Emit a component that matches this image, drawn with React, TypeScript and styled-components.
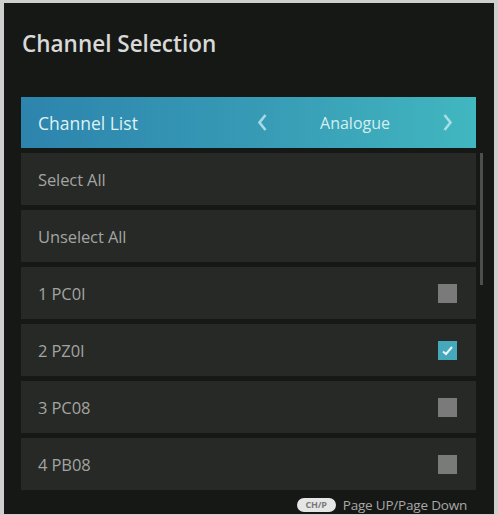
import React from "react";
import styled, { createGlobalStyle } from "styled-components";

const Global = createGlobalStyle`
  html, body { margin: 0; padding: 0; background: #cfcfcf; }
  body { font-family: "Open Sans", "Noto Sans", sans-serif; }
  #root { width: 498px; height: 515px; }
`;

const Frame = styled.div`
  width: 498px;
  height: 515px;
  box-sizing: border-box;
  padding: 3px 4px 1px 4px;
  background: #cfcfcf;
`;

const Panel = styled.div`
  height: 100%;
  background: #161816;
  display: flex;
  flex-direction: column;
  box-sizing: border-box;
  padding: 0 11px 0 17px;
`;

const Title = styled.h1`
  margin: 0;
  padding: 26px 0 0 1px;
  height: 95px;
  box-sizing: border-box;
  font-size: 22.5px;
  font-weight: 600;
  color: #d8d9d8;
  letter-spacing: 0;
  line-height: 30px;
`;

const Header = styled.div`
  height: 51px;
  margin-right: 7px;
  background: linear-gradient(90deg, #2d84ad 0%, #389cb6 55%, #41b7c0 100%);
  display: flex;
  align-items: center;
  padding: 0 23px 0 17px;
  color: #def2f4;
  font-size: 17.5px;
`;

const HeaderLabel = styled.span`
  flex: 1;
`;

const Chevron = styled.svg`
  width: 11px;
  height: 19px;
  flex: none;
`;

const Value = styled.span`
  width: 174px;
  text-align: center;
  font-size: 16px;
  color: #d4eef0;
`;

const Body = styled.div`
  display: flex;
  gap: 4px;
  padding-top: 5px;
`;

const List = styled.div`
  flex: 1;
  display: flex;
  flex-direction: column;
  gap: 5px;
`;

const Row = styled.div`
  height: 52px;
  background: #262926;
  display: flex;
  align-items: center;
  padding: 0 19px 0 17px;
  color: #a3a4a2;
  font-size: 16.5px;
  letter-spacing: -0.1px;
`;

const Label = styled.span`
  flex: 1;
`;

const Box = styled.div<{ $on?: boolean }>`
  width: 19px;
  height: 19px;
  background: ${(p) => (p.$on ? "#45a9bb" : "#7a7a7a")};
  display: flex;
  align-items: center;
  justify-content: center;
`;

const Track = styled.div`
  width: 3px;
`;

const Thumb = styled.div`
  width: 3px;
  height: 132px;
  background: #4d4f4d;
`;

const Footer = styled.div`
  display: flex;
  justify-content: flex-end;
  align-items: center;
  gap: 7px;
  padding: 6px 16px 0 0;
  color: #a8a8a8;
  font-size: 13.5px;
  letter-spacing: -0.2px;
`;

const Pill = styled.span`
  background: #e6e6e6;
  color: #7a7a7a;
  border-radius: 8px;
  font-size: 9px;
  font-weight: 700;
  line-height: 14px;
  padding: 0 9px;
`;

const channels = [
  { name: "1 PC0I", on: false },
  { name: "2 PZ0I", on: true },
  { name: "3 PC08", on: false },
  { name: "4 PB08", on: false },
];

export default function App() {
  return (
    <>
      <Global />
      <Frame>
        <Panel>
          <Title>Channel Selection</Title>
          <Header>
            <HeaderLabel>Channel List</HeaderLabel>
            <Chevron viewBox="0 0 11 19">
              <path d="M8.5 2 L2.5 9.5 L8.5 17" stroke="#a6dbe4" strokeWidth="2.6" fill="none" />
            </Chevron>
            <Value>Analogue</Value>
            <Chevron viewBox="0 0 11 19">
              <path d="M2.5 2 L8.5 9.5 L2.5 17" stroke="#a6dfe4" strokeWidth="2.6" fill="none" />
            </Chevron>
          </Header>
          <Body>
            <List>
              <Row>Select All</Row>
              <Row>Unselect All</Row>
              {channels.map((c) => (
                <Row key={c.name}>
                  <Label>{c.name}</Label>
                  <Box $on={c.on}>
                    {c.on && (
                      <svg width="13" height="13" viewBox="0 0 13 13">
                        <path d="M2 7.5 L5 10 L11 3" stroke="#e8f6f8" strokeWidth="2" fill="none" />
                      </svg>
                    )}
                  </Box>
                </Row>
              ))}
            </List>
            <Track>
              <Thumb />
            </Track>
          </Body>
          <Footer>
            <Pill>CH/P</Pill>
            <span>Page UP/Page Down</span>
          </Footer>
        </Panel>
      </Frame>
    </>
  );
}
